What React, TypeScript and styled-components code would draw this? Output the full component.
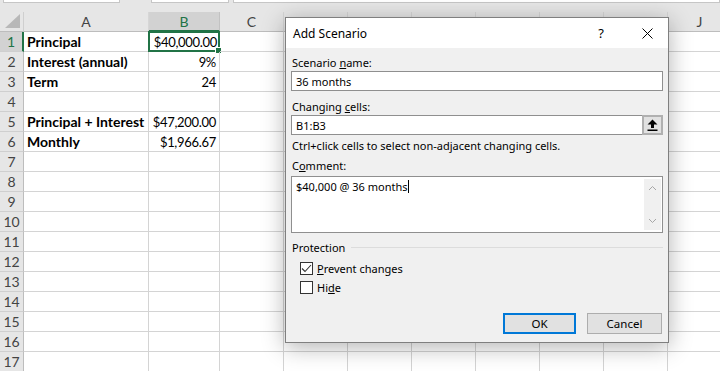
import React from 'react';
import styled, { createGlobalStyle } from 'styled-components';

const GlobalStyle = createGlobalStyle`
  html, body {
    margin: 0;
    padding: 0;
    background: #ffffff;
    overflow: hidden;
  }
`;

const Page = styled.div`
  position: relative;
  width: 720px;
  height: 371px;
  overflow: hidden;
  font-family: Lato, "Liberation Sans", sans-serif;
`;

const FormulaStrip = styled.div`
  height: 12px;
  background: #e6e6e6;
  display: grid;
  grid-template-columns: 117px 109px 1fr;
  padding-left: 3px;
  align-items: start;
`;

const StripBox = styled.div<{ $ml?: number }>`
  height: 2px;
  margin-left: ${p => p.$ml || 0}px;
  background: #ffffff;
  border: 1px solid #c6c6c6;
  border-top: none;
`;

const Sheet = styled.div`
  display: grid;
  grid-template-columns: 24px 125px 71px repeat(8, 64px);
  grid-auto-rows: 20px;
  width: 732px;
`;

const Corner = styled.div`
  background: #e6e6e6;
  border-right: 1px solid #cfcfcf;
  border-bottom: 1px solid #bdbdbd;
  box-sizing: border-box;
  display: flex;
  align-items: flex-end;
  justify-content: flex-end;
  padding: 0 3px 3px 0;
`;

const ColHead = styled.div<{ $active?: boolean }>`
  box-sizing: border-box;
  background: ${p => (p.$active ? '#d2d2d2' : '#e6e6e6')};
  color: ${p => (p.$active ? '#217346' : '#444444')};
  border-right: 1px solid ${p => (p.$active ? '#c2c2c2' : '#d6d6d6')};
  border-bottom: ${p => (p.$active ? '2px solid #217346' : '1px solid #bdbdbd')};
  display: flex;
  align-items: center;
  justify-content: center;
  font-size: 14px;
`;

const RowHead = styled.div<{ $active?: boolean }>`
  box-sizing: border-box;
  background: ${p => (p.$active ? '#d2d2d2' : '#e6e6e6')};
  color: ${p => (p.$active ? '#217346' : '#444444')};
  border-bottom: 1px solid #cfcfcf;
  border-right: ${p => (p.$active ? '2px solid #217346' : '1px solid #bdbdbd')};
  display: flex;
  align-items: center;
  justify-content: center;
  font-size: 14px;
`;

const Cell = styled.div<{ $bold?: boolean; $right?: boolean; $selected?: boolean }>`
  position: relative;
  box-sizing: border-box;
  border-right: 1px solid #d4d4d4;
  border-bottom: 1px solid #d4d4d4;
  display: flex;
  align-items: center;
  justify-content: ${p => (p.$right ? 'flex-end' : 'flex-start')};
  padding: 0 3px;
  font-size: ${p => (p.$right ? 13 : 14)}px;
  letter-spacing: ${p => (p.$right ? '-0.3px' : '0')};
  font-weight: ${p => (p.$bold ? 700 : 400)};
  color: #000;
  white-space: nowrap;
  ${p => p.$selected && `
    border: 2px solid #217346;
    margin: -1px 0 0 -1px;
    padding-right: 1px;
  `}
`;

const FillHandle = styled.span`
  position: absolute;
  right: -4px;
  bottom: -4px;
  width: 5px;
  height: 5px;
  background: #217346;
  border: 1px solid #ffffff;
`;

/* ---------- dialog ---------- */

const Dialog = styled.div`
  position: absolute;
  left: 285px;
  top: 17px;
  width: 384px;
  height: 326px;
  box-sizing: border-box;
  border: 1px solid #7f7f7f;
  background: #f0f0f0;
  box-shadow: 0 4px 22px rgba(0, 0, 0, 0.3);
  font-family: "Noto Sans", "Open Sans", sans-serif;
  font-size: 11px;
  color: #000;
  display: flex;
  flex-direction: column;
`;

const TitleBar = styled.div`
  height: 30px;
  background: #ffffff;
  display: flex;
  align-items: center;
  padding-left: 7px;
  font-size: 12px;
`;

const Title = styled.span`
  flex: 1;
`;

const TitleButton = styled.span<{ $w: number }>`
  width: ${p => p.$w}px;
  display: flex;
  justify-content: center;
  align-items: center;
  font-size: 13px;
`;

const Body = styled.div`
  padding: 7px 5px 0 5px;
  display: flex;
  flex-direction: column;
`;

const Label = styled.div<{ $mt?: number }>`
  line-height: 15px;
  height: 15px;
  margin-top: ${p => p.$mt || 0}px;
  padding-left: 1px;
  white-space: nowrap;
`;

const TextBox = styled.div<{ $mt?: number; $h?: number }>`
  position: relative;
  margin-top: ${p => p.$mt || 0}px;
  height: ${p => p.$h || 20}px;
  box-sizing: border-box;
  border: 1px solid #8f8f8f;
  background: #ffffff;
  display: flex;
  align-items: ${p => (p.$h ? 'flex-start' : 'center')};
  padding-left: 4px;
  line-height: 15px;
`;

const TextValue = styled.span<{ $pt?: number }>`
  flex: 1;
  padding-top: ${p => p.$pt ?? 1}px;
`;

const Caret = styled.span`
  display: inline-block;
  width: 1px;
  height: 13px;
  background: #000;
  vertical-align: -2px;
`;

const RefButton = styled.span`
  width: 21px;
  height: 20px;
  margin: -1px -1px -1px 0;
  box-sizing: border-box;
  border: 2px solid #b0b0b0;
  background: #e1e1e1;
  display: flex;
  align-items: center;
  justify-content: center;
`;

const ScrollTrack = styled.div`
  align-self: stretch;
  width: 17px;
  margin: 2px 1px 2px 0;
  background: #f0f0f0;
  display: flex;
  flex-direction: column;
  justify-content: space-between;
  align-items: center;
  padding: 6px 0;
`;

const GroupHead = styled.div`
  margin-top: 7px;
  height: 15px;
  display: flex;
  align-items: center;
  gap: 6px;
  padding-left: 1px;
  &::after {
    content: '';
    flex: 1;
    height: 1px;
    background: #dcdcdc;
  }
`;

const CheckRow = styled.label<{ $mt: number }>`
  margin-top: ${p => p.$mt}px;
  height: 15px;
  display: flex;
  align-items: center;
  gap: 4px;
  padding-left: 9px;
`;

const CheckBox = styled.span`
  width: 13px;
  height: 13px;
  box-sizing: border-box;
  border: 1px solid #333333;
  background: #ffffff;
  display: flex;
  align-items: center;
  justify-content: center;
`;

const ButtonRow = styled.div`
  margin-top: 18px;
  display: flex;
  justify-content: flex-end;
  gap: 11px;
  padding-right: 1px;
`;

const DialogButton = styled.button<{ $default?: boolean }>`
  width: ${p => (p.$default ? 73 : 75)}px;
  height: 21px;
  box-sizing: border-box;
  font: inherit;
  font-size: 11.5px;
  color: #000;
  background: #e1e1e1;
  border: ${p => (p.$default ? '2px solid #0078d7' : '1px solid #adadad')};
  padding: 0;
`;

const cols = ['A', 'B', 'C', 'D', 'E', 'F', 'G', 'H', 'I', 'J'];
const rows: [string, string][] = [
  ['Principal', '$40,000.00'],
  ['Interest (annual)', '9%'],
  ['Term', '24'],
  ['', ''],
  ['Principal + Interest', '$47,200.00'],
  ['Monthly', '$1,966.67'],
];

const Chevron = ({ up }: { up?: boolean }) => (
  <svg width="9" height="6" viewBox="0 0 9 6">
    <path d={up ? 'M1 5 L4.5 1.5 L8 5' : 'M1 1 L4.5 4.5 L8 1'} fill="none" stroke="#a6a6a6" strokeWidth="1" />
  </svg>
);

const App: React.FC = () => {
  return (
    <Page>
      <GlobalStyle />
      <FormulaStrip>
        <StripBox />
        <StripBox $ml={31} />
        <StripBox $ml={4} />
      </FormulaStrip>
      <Sheet>
        <Corner>
          <svg width="15" height="14" viewBox="0 0 15 14">
            <polygon points="15,0 15,14 0,14" fill="#b8b8b8" />
          </svg>
        </Corner>
        {cols.map(c => (
          <ColHead key={c} $active={c === 'B'}>{c}</ColHead>
        ))}
        {Array.from({ length: 17 }).map((_, i) => {
          const data = rows[i] || ['', ''];
          return (
            <React.Fragment key={i}>
              <RowHead $active={i === 0}>{i + 1}</RowHead>
              <Cell $bold>{data[0]}</Cell>
              <Cell $right $selected={i === 0}>
                {data[1]}
                {i === 0 && <FillHandle />}
              </Cell>
              {cols.slice(2).map(c => (
                <Cell key={c} />
              ))}
            </React.Fragment>
          );
        })}
      </Sheet>

      <Dialog>
        <TitleBar>
          <Title>Add Scenario</Title>
          <TitleButton $w={50}>?</TitleButton>
          <TitleButton $w={42}>
            <svg width="11" height="11" viewBox="0 0 11 11">
              <path d="M0.5 0.5 L10.5 10.5 M10.5 0.5 L0.5 10.5" stroke="#000" strokeWidth="1" />
            </svg>
          </TitleButton>
        </TitleBar>
        <Body>
          <Label>Scenario <u>n</u>ame:</Label>
          <TextBox $mt={1}><TextValue>36 months</TextValue></TextBox>
          <Label $mt={8}>Changing <u>c</u>ells:</Label>
          <TextBox $mt={1}>
            <TextValue>B1:B3</TextValue>
            <RefButton>
              <svg width="11" height="12" viewBox="0 0 11 12">
                <path d="M5.5 0.5 L10.5 5.5 L7 5.5 L7 9 L4 9 L4 5.5 L0.5 5.5 Z" fill="#000" />
                <rect x="0.5" y="10.5" width="10" height="1.5" fill="#000" />
              </svg>
            </RefButton>
          </TextBox>
          <Label $mt={3}>Ctrl+click cells to select non-adjacent changing cells.</Label>
          <Label $mt={5}>C<u>o</u>mment:</Label>
          <TextBox $mt={3} $h={57}>
            <TextValue $pt={2}>$40,000 @ 36 months<Caret /></TextValue>
            <ScrollTrack>
              <Chevron up />
              <Chevron />
            </ScrollTrack>
          </TextBox>
          <GroupHead>Protection</GroupHead>
          <CheckRow $mt={6}>
            <CheckBox>
              <svg width="11" height="9" viewBox="0 0 11 9">
                <path d="M1 4.5 L4 7.5 L10 1" fill="none" stroke="#333" strokeWidth="1.1" />
              </svg>
            </CheckBox>
            <span><u>P</u>revent changes</span>
          </CheckRow>
          <CheckRow $mt={4}>
            <CheckBox />
            <span>Hi<u>d</u>e</span>
          </CheckRow>
          <ButtonRow>
            <DialogButton $default>OK</DialogButton>
            <DialogButton>Cancel</DialogButton>
          </ButtonRow>
        </Body>
      </Dialog>
    </Page>
  );
};

export default App;
